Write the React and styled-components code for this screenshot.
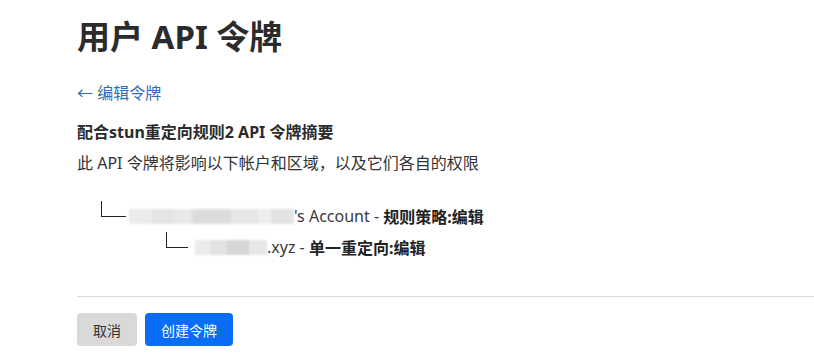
import React from "react";
import styled, { createGlobalStyle } from "styled-components";

const Global = createGlobalStyle`
  html, body { margin: 0; padding: 0; background: #fff; }
  body {
    font-family: "Noto Sans", "Noto Sans CJK SC", sans-serif;
    color: #313131;
    overflow: hidden;
  }
`;

const Page = styled.div`
  padding: 17px 0 0 77px;
  display: flex;
  flex-direction: column;
`;

const Title = styled.h1`
  margin: 0;
  font-size: 33px;
  line-height: 40px;
  font-weight: 700;
  color: #2b2b2b;
  font-family: "Noto Sans", "Noto Sans CJK SC", sans-serif;
`;

const BackLink = styled.a`
  margin-top: 25px;
  font-size: 16px;
  line-height: 22px;
  color: #2f6cb5;
  text-decoration: none;
  align-self: flex-start;
  cursor: pointer;
`;

const Heading = styled.h2`
  margin: 17px 0 0;
  font-size: 16px;
  line-height: 22px;
  font-weight: 700;
  color: #2b2b2b;
`;

const Desc = styled.p`
  margin: 9px 0 0;
  font-size: 16px;
  line-height: 22px;
  color: #333;
`;

const Tree = styled.div`
  margin-top: 27px;
  display: flex;
  flex-direction: column;
  gap: 1px;
`;

const Row = styled.div`
  display: flex;
  align-items: center;
  height: 30px;
  padding-left: ${(p) => p.$indent}px;
  font-size: 16px;
  color: #3a3a3a;
`;

const Connector = styled.span`
  width: ${(p) => p.$w}px;
  height: 16px;
  border-left: 1.5px solid #222;
  border-bottom: 1.5px solid #222;
  box-sizing: border-box;
  margin-top: -14px;
  margin-right: ${(p) => p.$gap}px;
  flex: none;
`;

const Redacted = styled.span`
  width: ${(p) => p.$w}px;
  height: 15px;
  flex: none;
  background: ${(p) => p.$bg};
  filter: blur(0.8px);
`;

const Bold = styled.b`
  font-weight: 700;
  color: #222;
`;

const Divider = styled.hr`
  margin: 34px 0 0;
  border: none;
  border-top: 1px solid #d9d9d9;
  height: 0;
`;

const Actions = styled.div`
  margin-top: 16px;
  display: flex;
  gap: 8px;
`;

const Button = styled.button`
  height: 33px;
  padding: 0 16px;
  border: none;
  border-radius: 4px;
  font-size: 14px;
  font-family: "Noto Sans", "Noto Sans CJK SC", sans-serif;
  background: ${(p) => (p.$primary ? "#0a6df6" : "#d9d9d9")};
  color: ${(p) => (p.$primary ? "#fff" : "#333")};
  cursor: pointer;
`;

const bg1 =
  "linear-gradient(90deg, #ececec 0 14%, #e4e4e4 14% 28%, #e9e9e9 28% 38%, #dcdcdc 38% 62%, #e6e6e6 62% 78%, #eeeeee 78% 86%, #e3e3e3 86% 100%)";
const bg2 =
  "linear-gradient(90deg, #ebebeb 0 22%, #e2e2e2 22% 45%, #d6d6d6 45% 75%, #e6e6e6 75% 100%)";

export default function App() {
  return (
    <>
      <Global />
      <Page>
        <Title>用户 API 令牌</Title>
        <BackLink>← 编辑令牌</BackLink>
        <Heading>配合stun重定向规则2 API 令牌摘要</Heading>
        <Desc>此 API 令牌将影响以下帐户和区域，以及它们各自的权限</Desc>
        <Tree>
          <Row $indent={24}>
            <Connector $w={25} $gap={3} />
            <Redacted $w={165} $bg={bg1} />
            <span>'s Account - </span>
            <Bold>&nbsp;规则策略:编辑</Bold>
          </Row>
          <Row $indent={89}>
            <Connector $w={22} $gap={7} />
            <Redacted $w={72} $bg={bg2} />
            <span>.xyz - </span>
            <Bold>&nbsp;单一重定向:编辑</Bold>
          </Row>
        </Tree>
        <Divider />
        <Actions>
          <Button>取消</Button>
          <Button $primary>创建令牌</Button>
        </Actions>
      </Page>
    </>
  );
}
